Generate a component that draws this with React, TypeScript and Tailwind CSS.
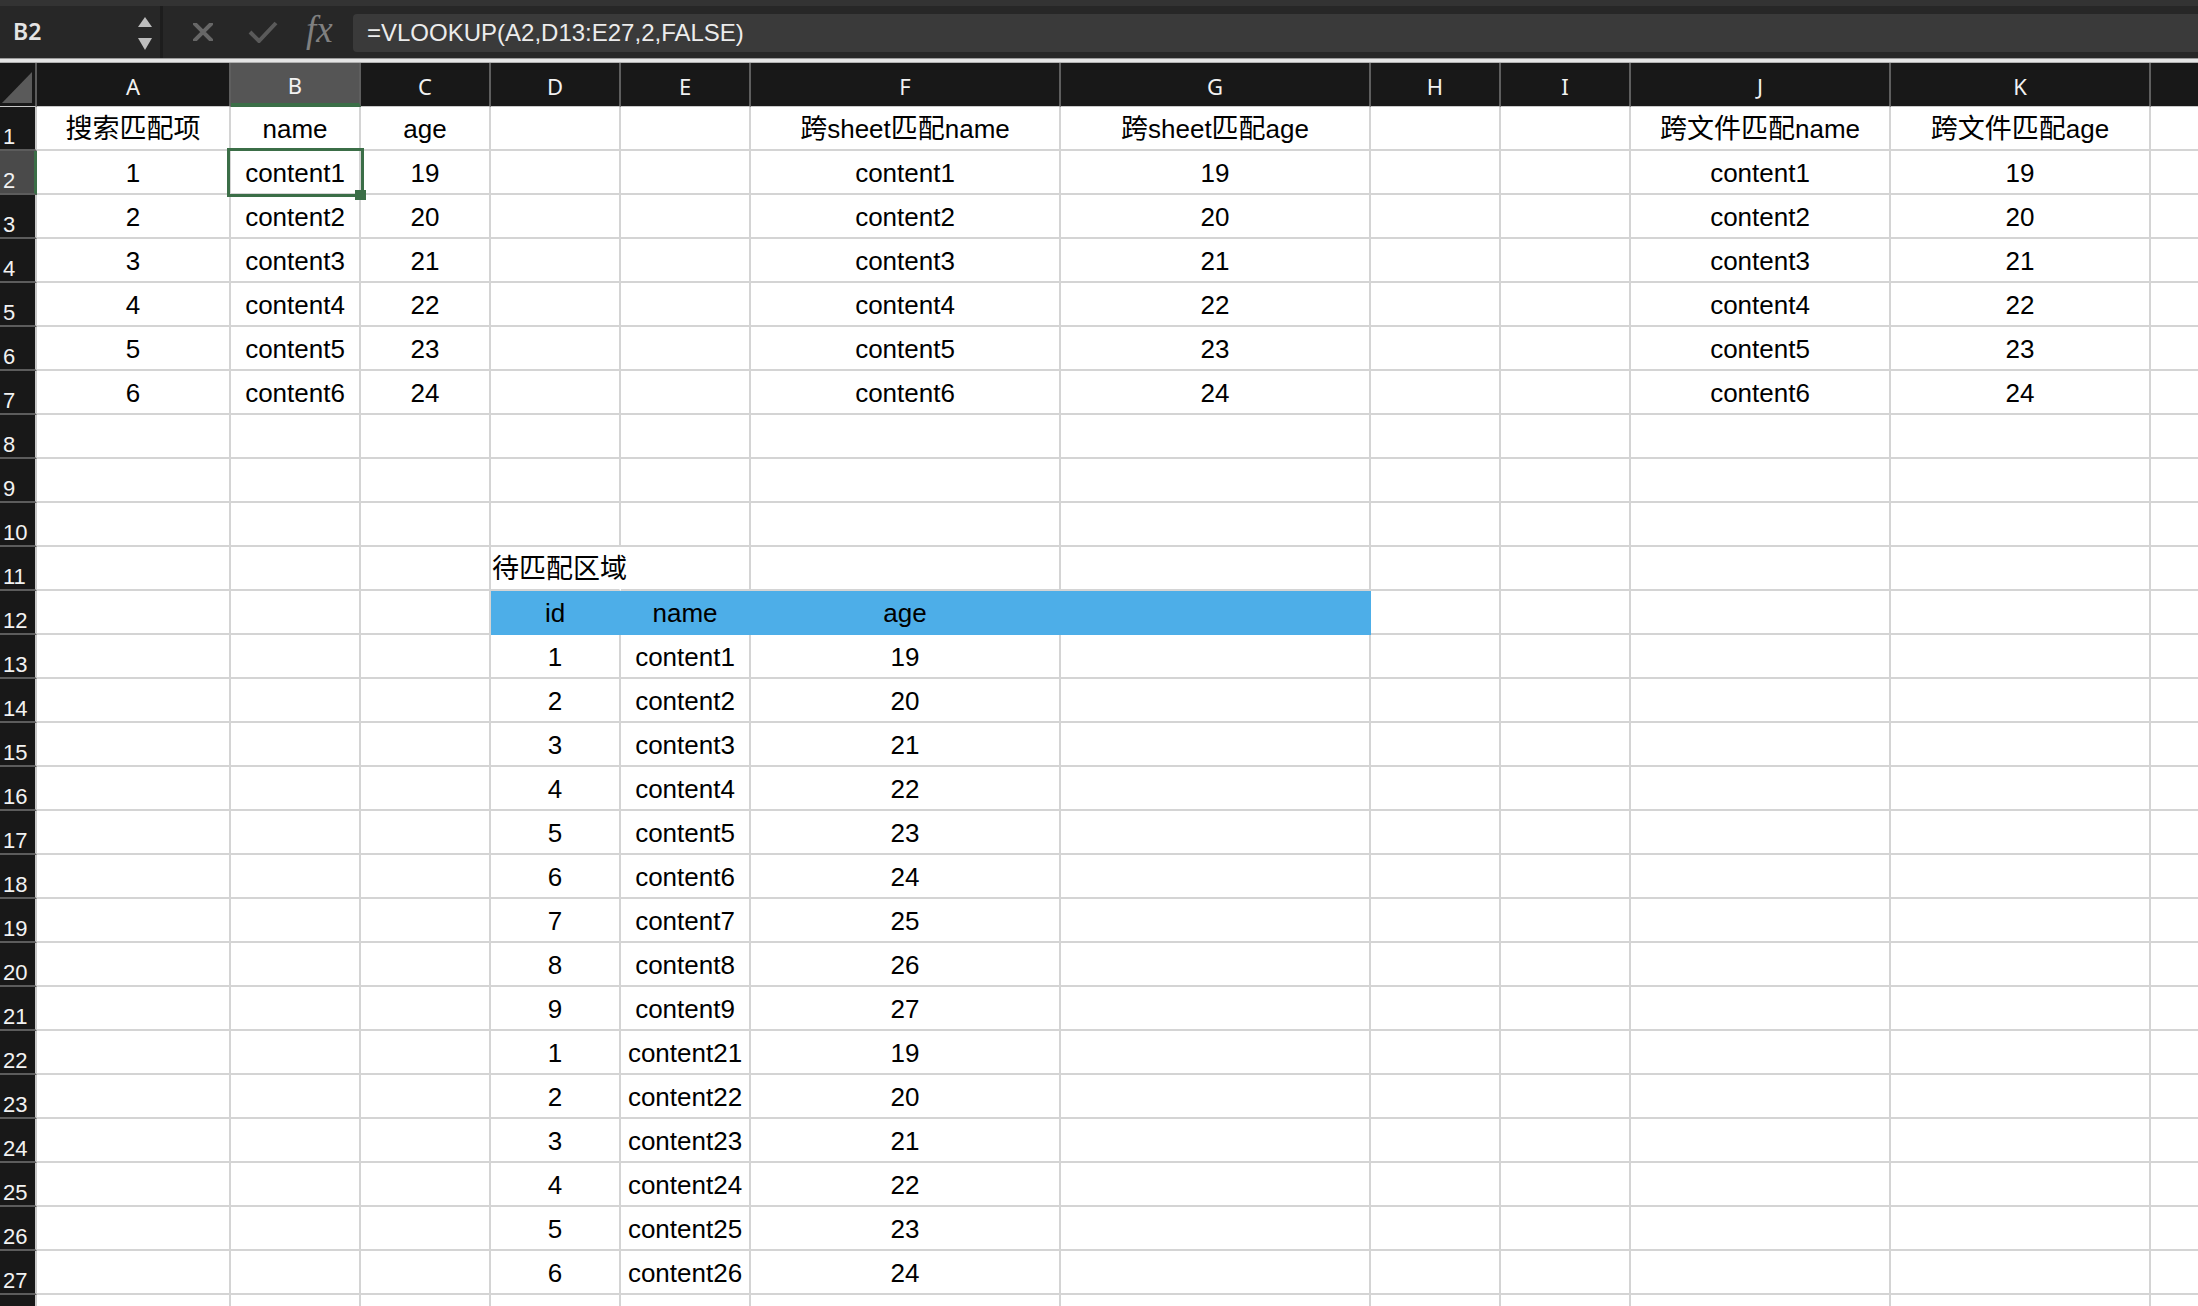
import React from "react";

type Col = { k: string; w: string; label: boolean };

const cols: Col[] = [
  { k: "A", w: "w-[194px] border-r-2", label: true },
  { k: "B", w: "w-[130px] border-r-2", label: true },
  { k: "C", w: "w-[130px] border-r-2", label: true },
  { k: "D", w: "w-[130px] border-r-2", label: true },
  { k: "E", w: "w-[130px] border-r-2", label: true },
  { k: "F", w: "w-[310px] border-r-2", label: true },
  { k: "G", w: "w-[310px] border-r-2", label: true },
  { k: "H", w: "w-[130px] border-r-2", label: true },
  { k: "I", w: "w-[130px] border-r-2", label: true },
  { k: "J", w: "w-[260px] border-r-2", label: true },
  { k: "K", w: "w-[260px] border-r-2", label: true },
  { k: "L", w: "w-[47px]", label: false },
];

function cellValue(r: number, c: string): string {
  if (r === 1) {
    const m: Record<string, string> = {
      A: "搜索匹配项",
      B: "name",
      C: "age",
      F: "跨sheet匹配name",
      G: "跨sheet匹配age",
      J: "跨文件匹配name",
      K: "跨文件匹配age",
    };
    return m[c] ?? "";
  }
  if (r >= 2 && r <= 7) {
    const i = r - 1;
    if (c === "A") return String(i);
    if (c === "B" || c === "F" || c === "J") return `content${i}`;
    if (c === "C" || c === "G" || c === "K") return String(18 + i);
    return "";
  }
  if (r === 11 && c === "D") return "待匹配区域";
  if (r === 12) {
    if (c === "D") return "id";
    if (c === "E") return "name";
    if (c === "F") return "age";
    return "";
  }
  if (r >= 13 && r <= 21) {
    const i = r - 12;
    if (c === "D") return String(i);
    if (c === "E") return `content${i}`;
    if (c === "F") return String(18 + i);
    return "";
  }
  if (r >= 22 && r <= 27) {
    const i = r - 21;
    if (c === "D") return String(i);
    if (c === "E") return `content${20 + i}`;
    if (c === "F") return String(18 + i);
    return "";
  }
  return "";
}

function T({ s }: { s: string }) {
  const parts = s.split(/([\u4e00-\u9fff]+)/);
  return (
    <>
      {parts.map((p, i) =>
        /[\u4e00-\u9fff]/.test(p) ? (
          <span key={i} className="text-[27px]">
            {p}
          </span>
        ) : (
          <span key={i}>{p}</span>
        )
      )}
    </>
  );
}

function Cell({ r, col }: { r: number; col: Col }) {
  const v = cellValue(r, col.k);
  const isBlue = r === 12 && ["D", "E", "F", "G"].includes(col.k);
  const isOverflow = r === 11 && col.k === "D";
  const isSel = r === 2 && col.k === "B";

  let cls = `${col.w} shrink-0 h-[44px] border-b-2 flex items-end pb-[5px] leading-[30px] whitespace-nowrap `;
  if (isBlue) cls += "bg-[#4daee8] border-[#4daee8] justify-center ";
  else if (isOverflow) cls += "border-b-[#d4d4d4] border-r-transparent justify-start pl-[1px] overflow-visible ";
  else cls += "border-[#d4d4d4] justify-center ";
  if (isSel) cls += "relative ";

  return (
    <div className={cls}>
      {v && (
        <span className="text-[26px] text-black">
          <T s={v} />
        </span>
      )}
      {isSel && (
        <>
          <div className="absolute left-[-4px] top-[-3px] w-[137px] h-[49px] border-[3px] border-[#3b6e47]" />
          <div className="absolute left-[124px] top-[39px] w-[11px] h-[10px] bg-[#3b6e47]" />
        </>
      )}
    </div>
  );
}

function RowHeader({ r, showLabel }: { r: number; showLabel: boolean }) {
  const sel = r === 2;
  return (
    <div
      className={`w-[37px] shrink-0 h-[44px] border-b-2 border-b-[#5c5c5c] flex items-end pl-[3px] leading-[24px] ${
        sel
          ? "bg-[#4a4a4a] border-r-[3px] border-r-[#3b6e47]"
          : "bg-[#181818] border-r-2 border-r-[#c9c9c9]"
      }`}
    >
      {showLabel && (
        <span className="text-[22px] text-[#f2f2f2] font-['Liberation_Sans',sans-serif]">{r}</span>
      )}
    </div>
  );
}

export default function App() {
  const rows = Array.from({ length: 28 }, (_, i) => i + 1);
  return (
    <div className="w-[2198px] h-[1306px] overflow-hidden bg-white font-['Liberation_Sans','Noto_Sans_CJK_SC',sans-serif]">
      {/* top strip */}
      <div className="h-[6px] bg-[#333333]" />
      {/* formula bar */}
      <div className="flex h-[52px] bg-[#272727]">
        <div className="w-[160px] shrink-0 flex items-center justify-between pl-[13px] pr-[7px]">
          <span className="text-[23px] font-semibold text-[#e4e4e4] font-['Noto_Sans',sans-serif] leading-none pb-[2px]">
            B2
          </span>
          <svg width="16" height="52" viewBox="0 0 16 52">
            <polygon points="1,21 15,21 8,11" fill="#bdbdbd" />
            <polygon points="1,32 15,32 8,44" fill="#bdbdbd" />
          </svg>
        </div>
        <div className="w-[3px] shrink-0 bg-[#1d1d1d]" />
        <div className="w-[190px] shrink-0 flex items-center">
          <svg className="ml-[30px]" width="20" height="18" viewBox="0 0 20 18">
            <path d="M2 1 L18 17 M18 1 L2 17" stroke="#676767" strokeWidth="4" strokeLinecap="square" />
          </svg>
          <svg className="ml-[35px]" width="30" height="22" viewBox="0 0 30 22">
            <path d="M2 11 L11 20 L28 2" stroke="#5a5a5a" strokeWidth="4" fill="none" />
          </svg>
          <span className="ml-[28px] text-[37px] italic text-[#808080] font-['Liberation_Serif',serif] leading-none pb-[6px]">
            fx
          </span>
        </div>
        <div className="flex-1 mt-[8px] h-[38px] bg-[#3a3a3a] rounded-l-[4px] flex items-center pl-[14px]">
          <span className="text-[24px] text-[#ececec] leading-none">=VLOOKUP(A2,D13:E27,2,FALSE)</span>
        </div>
      </div>
      {/* separator */}
      <div className="h-[5px] bg-[#e4e4e4] border-t border-t-[#9a9a9a] border-b border-b-[#b0b0b0]" />
      {/* column header */}
      <div className="flex h-[44px] bg-[#181818]">
        <div className="w-[37px] shrink-0 h-[44px] border-r-2 border-r-[#5c5c5c] border-b border-b-[#c8c8c8] relative">
          <svg className="absolute left-0 top-0" width="35" height="44" viewBox="0 0 35 44">
            <polygon points="2,40 32,40 32,9" fill="#5a5a5a" />
          </svg>
        </div>
        {cols.map((c) => (
          <div
            key={c.k}
            className={`${c.w} shrink-0 h-[44px] border-r-[#5e5e5e] flex items-center justify-center pt-[3px] ${
              c.k === "B" ? "bg-[#555555] border-b-4 border-b-[#3b6e47]" : "border-b border-b-[#c8c8c8]"
            }`}
          >
            {c.label && (
              <span className="text-[22px] text-[#f2f2f2] font-['Noto_Sans',sans-serif] leading-none">{c.k}</span>
            )}
          </div>
        ))}
      </div>
      {/* rows */}
      {rows.map((r) => (
        <div key={r} className="flex">
          <RowHeader r={r} showLabel={r <= 27} />
          {cols.map((c) => (
            <Cell key={c.k} r={r} col={c} />
          ))}
        </div>
      ))}
    </div>
  );
}
